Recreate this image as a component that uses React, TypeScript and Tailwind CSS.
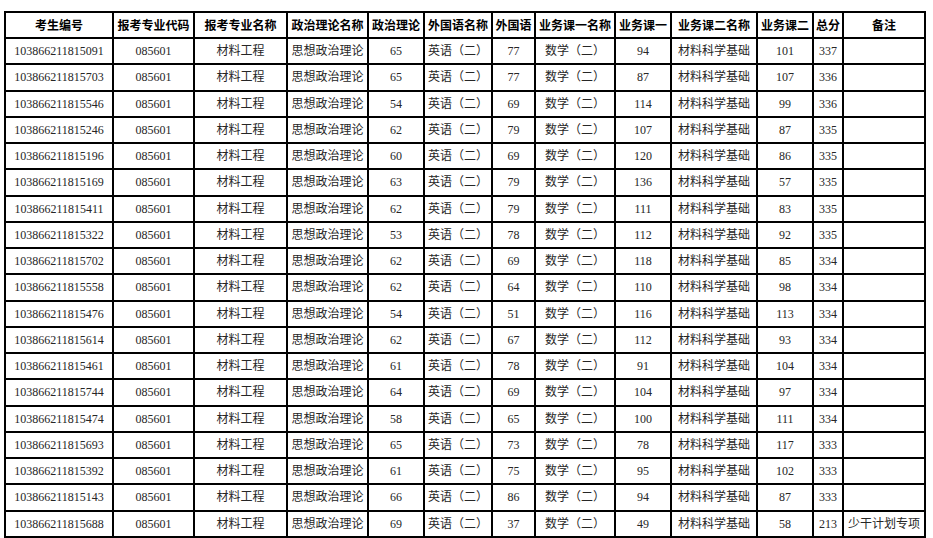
import React from 'react'

const HEADERS = [
  '考生编号',
  '报考专业代码',
  '报考专业名称',
  '政治理论名称',
  '政治理论',
  '外国语名称',
  '外国语',
  '业务课一名称',
  '业务课一',
  '业务课二名称',
  '业务课二',
  '总分',
  '备注',
]

const WIDTHS = ['w-[108px]', 'w-[81px]', 'w-[93px]', 'w-[81px]', 'w-[56px]', 'w-[68px]', 'w-[43px]', 'w-[80px]', 'w-[56px]', 'w-[86px]', 'w-[56px]', 'w-[30px]', 'w-[82px]']

// id, politics, english, math, materials, total, note
const ROWS: [string, number, number, number, number, number, string][] = [
  ['103866211815091', 65, 77, 94, 101, 337, ''],
  ['103866211815703', 65, 77, 87, 107, 336, ''],
  ['103866211815546', 54, 69, 114, 99, 336, ''],
  ['103866211815246', 62, 79, 107, 87, 335, ''],
  ['103866211815196', 60, 69, 120, 86, 335, ''],
  ['103866211815169', 63, 79, 136, 57, 335, ''],
  ['103866211815411', 62, 79, 111, 83, 335, ''],
  ['103866211815322', 53, 78, 112, 92, 335, ''],
  ['103866211815702', 62, 69, 118, 85, 334, ''],
  ['103866211815558', 62, 64, 110, 98, 334, ''],
  ['103866211815476', 54, 51, 116, 113, 334, ''],
  ['103866211815614', 62, 67, 112, 93, 334, ''],
  ['103866211815461', 61, 78, 91, 104, 334, ''],
  ['103866211815744', 64, 69, 104, 97, 334, ''],
  ['103866211815474', 58, 65, 100, 111, 334, ''],
  ['103866211815693', 65, 73, 78, 117, 333, ''],
  ['103866211815392', 61, 75, 95, 102, 333, ''],
  ['103866211815143', 66, 86, 94, 87, 333, ''],
  ['103866211815688', 69, 37, 49, 58, 213, '少干计划专项'],
]

export default function App() {
  return (
    <div className="w-[933px] h-[538px] bg-white pt-[11px] pl-[4px]">
      <table className="table-fixed border-collapse border-2 border-black text-[12px] leading-none text-[#262626] font-['Liberation_Serif','Noto_Sans_CJK_SC',serif]">
        <colgroup>
          {WIDTHS.map((w, i) => (
            <col key={i} className={w} />
          ))}
        </colgroup>
        <thead>
          <tr className="h-[26px]">
            {HEADERS.map(h => (
              <th
                key={h}
                className="border-2 border-black p-0 text-center whitespace-nowrap font-bold text-black font-['Noto_Sans_CJK_SC',sans-serif]"
              >
                {h}
              </th>
            ))}
          </tr>
        </thead>
        <tbody>
          {ROWS.map(r => {
            const cells = [r[0], '085601', '材料工程', '思想政治理论', r[1], '英语（二）', r[2], '数学（二）', r[3], '材料科学基础', r[4], r[5], r[6]]
            return (
              <tr key={r[0]} className="h-[26.26px]">
                {cells.map((c, i) => (
                  <td key={i} className="border-2 border-black p-0 text-center whitespace-nowrap">
                    {c}
                  </td>
                ))}
              </tr>
            )
          })}
        </tbody>
      </table>
    </div>
  )
}
